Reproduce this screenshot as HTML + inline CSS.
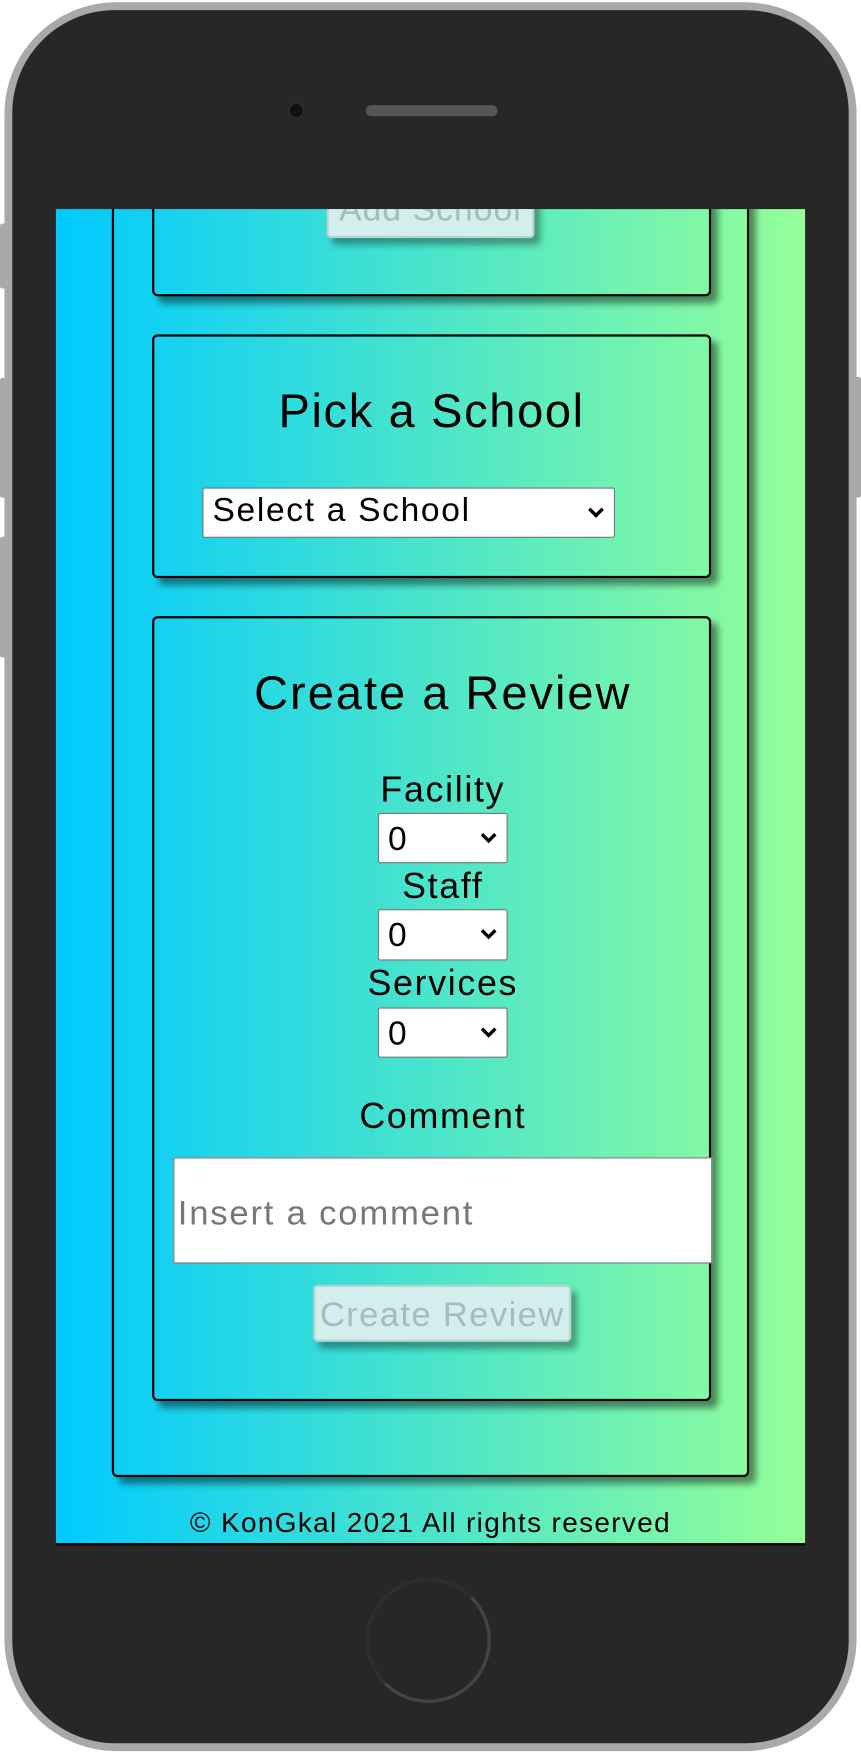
<!DOCTYPE html>
<html><head><style>
html,body{margin:0;padding:0;background:#fff;width:861px;height:1754px;overflow:hidden}
#w{position:absolute;left:0;top:0;width:770px;height:1568px;transform:scale(1.11818);transform-origin:0 0;font-family:"Liberation Sans",sans-serif}
.a{position:absolute}
.phone{left:4px;top:2px;width:762px;height:1564px;border-radius:100px;background:#a9a9a9}
.inner{left:11px;top:9px;width:748px;height:1550px;border-radius:92px;background:#272727}
.screen{left:50px;top:187px;width:670px;height:1193px;background:linear-gradient(to right,#00caff,#95ff98);overflow:hidden;border-bottom:2px solid #000}
.box{border:2.5px solid #000;border-radius:5px;box-shadow:6px 6px 6px rgba(0,0,0,.45);box-sizing:border-box}
.t{text-align:center;color:#000;white-space:nowrap}
.sel{background:#fff;border:1px solid #777;border-radius:2px;box-sizing:border-box;font-size:30px;color:#000;line-height:1;letter-spacing:1.5px}
.sel svg{position:absolute;right:8px;top:50%;margin-top:-6px}
.btn{background:#d3efed;border:2px solid #b5d4d0;border-radius:4px;box-sizing:border-box;box-shadow:5px 6px 6px rgba(0,0,0,.35);color:#a2bebc;text-align:center;white-space:nowrap}
.side{background:#a9a9a9;border-radius:2px}
</style></head><body><div id="w">
<div class="a side" style="left:0;top:200px;width:8px;height:58px"></div>
<div class="a side" style="left:0;top:338px;width:8px;height:107px"></div>
<div class="a side" style="left:0;top:480px;width:8px;height:108px"></div>
<div class="a side" style="left:762px;top:337px;width:8px;height:108px"></div>
<div class="a phone"></div>
<div class="a inner"></div>
<div class="a" style="left:258px;top:92px;width:12px;height:12px;border-radius:50%;background:#111;border:1px solid #333"></div>
<div class="a" style="left:327px;top:94px;width:118px;height:10px;border-radius:5px;background:#555"></div>
<div class="a" style="left:327px;top:1411px;width:112px;height:112px;border-radius:50%;border:3px solid #444;box-sizing:border-box;border-left-color:#2e2e2e;border-top-color:#2e2e2e"></div>
<div class="a screen">
  <div class="a box" style="left:50px;top:-30px;width:570px;height:1164px"></div>
  <div class="a box" style="left:86px;top:-30px;width:500px;height:108px"></div>
  <div class="a btn" style="left:242px;top:-30px;width:186px;height:56px;font-size:30px;line-height:58px;letter-spacing:1px">Add School</div>
  <div class="a box" style="left:86px;top:112px;width:500px;height:218px"></div>
  <div class="a t" style="left:86px;top:157px;width:500px;font-size:42px;letter-spacing:1.5px">Pick a School</div>
  <div class="a sel" style="left:131px;top:249px;width:369px;height:45px;padding:5px 0 0 8px">Select a School<svg width="16" height="12"><path d="M2 2l6 6 6-6" stroke="#000" stroke-width="3" fill="none"/></svg></div>
  <div class="a box" style="left:86px;top:364px;width:500px;height:702px"></div>
  <div class="a t" style="left:96px;top:409px;width:500px;font-size:42px;letter-spacing:1.8px">Create a Review</div>
  <div class="a t" style="left:96px;top:501px;width:500px;font-size:32px;letter-spacing:1.5px">Facility</div>
  <div class="a sel" style="left:288px;top:540px;width:116px;height:45px;padding:8px 0 0 8px">0<svg width="16" height="12"><path d="M2 2l6 6 6-6" stroke="#000" stroke-width="3" fill="none"/></svg></div>
  <div class="a t" style="left:96px;top:587px;width:500px;font-size:32px;letter-spacing:1.5px">Staff</div>
  <div class="a sel" style="left:288px;top:626px;width:116px;height:46px;padding:8px 0 0 8px">0<svg width="16" height="12"><path d="M2 2l6 6 6-6" stroke="#000" stroke-width="3" fill="none"/></svg></div>
  <div class="a t" style="left:96px;top:674px;width:500px;font-size:32px;letter-spacing:1.5px">Services</div>
  <div class="a sel" style="left:288px;top:714px;width:116px;height:45px;padding:8px 0 0 8px">0<svg width="16" height="12"><path d="M2 2l6 6 6-6" stroke="#000" stroke-width="3" fill="none"/></svg></div>
  <div class="a t" style="left:96px;top:793px;width:500px;font-size:32px;letter-spacing:1.5px">Comment</div>
  <div class="a" style="left:105px;top:848px;width:482px;height:95px;background:#fff;border:1px solid #777;box-sizing:border-box;font-size:31px;color:#777;padding:31px 0 0 3px;letter-spacing:1.6px;white-space:nowrap">Insert a comment</div>
  <div class="a btn" style="left:230px;top:962px;width:231px;height:51px;font-size:31px;line-height:50px;letter-spacing:1.2px">Create Review</div>
  <div class="a t" style="left:0;top:1161px;width:670px;font-size:25px;letter-spacing:1.2px">© KonGkal 2021 All rights reserved</div>
</div>
</div></body></html>
